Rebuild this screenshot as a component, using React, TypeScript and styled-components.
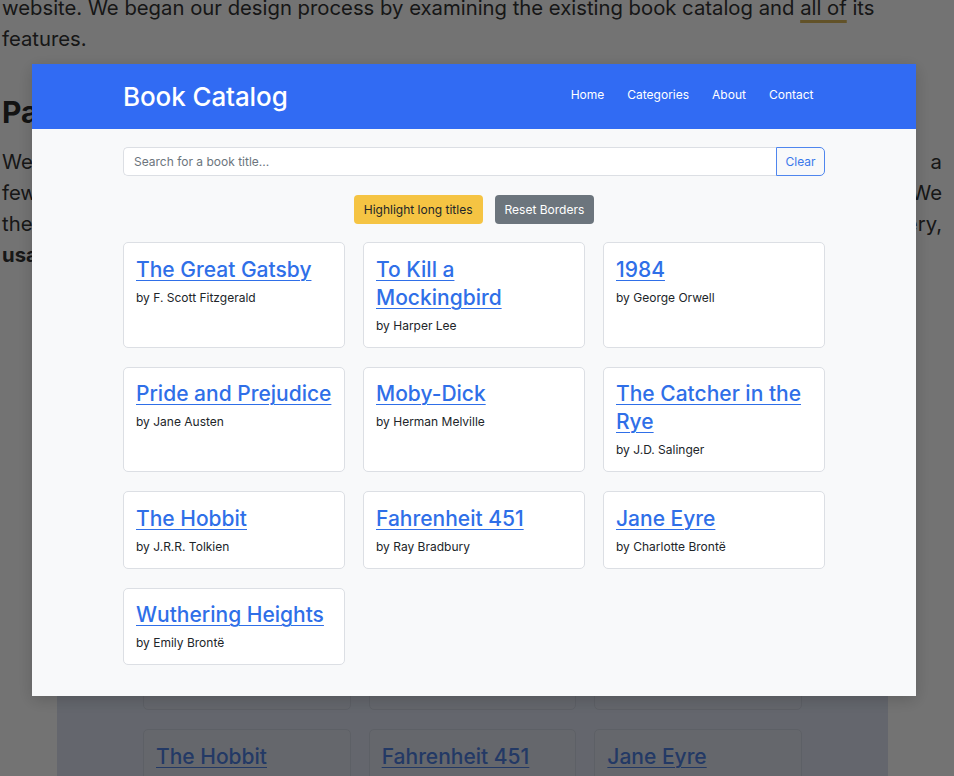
import React from 'react';
import styled, { createGlobalStyle } from 'styled-components';

// =============================================================================
// Constants
// =============================================================================

const BRAND_BLUE = '#316bf3';
const LINK_BLUE = '#2f6fe8';
const TEXT_DARK = '#212529';
const BORDER = '#dcdfe4';

const FONT = `Inter, "Noto Sans", "Liberation Sans", sans-serif`;

const BOOKS = [
  { title: 'The Great Gatsby', author: 'F. Scott Fitzgerald' },
  { title: 'To Kill a Mockingbird', author: 'Harper Lee' },
  { title: '1984', author: 'George Orwell' },
  { title: 'Pride and Prejudice', author: 'Jane Austen' },
  { title: 'Moby-Dick', author: 'Herman Melville' },
  { title: 'The Catcher in the Rye', author: 'J.D. Salinger' },
  { title: 'The Hobbit', author: 'J.R.R. Tolkien' },
  { title: 'Fahrenheit 451', author: 'Ray Bradbury' },
  { title: 'Jane Eyre', author: 'Charlotte Brontë' },
  { title: 'Wuthering Heights', author: 'Emily Brontë' },
];

const NAV = ['Home', 'Categories', 'About', 'Contact'];

type Tone = 'live' | 'preview';

// =============================================================================
// Global
// =============================================================================

const GlobalStyle = createGlobalStyle`
  html, body {
    margin: 0;
    padding: 0;
    background: #ffffff;
    height: 776px;
    overflow: hidden;
  }
  * {
    box-sizing: border-box;
  }
`;

// =============================================================================
// Background article
// =============================================================================

const Article = styled.article`
  width: 954px;
  padding: 0 12px 0 2px;
  font-family: ${FONT};
  font-size: 20.3px;
  line-height: 31px;
  color: #333333;
`;

const Paragraph = styled.p<{ $first?: boolean }>`
  margin: ${(p) => (p.$first ? '-8px' : '0')} 0 0;
`;

const Line = styled.span<{ $justify?: boolean }>`
  display: block;
  text-align: ${(p) => (p.$justify ? 'justify' : 'left')};
  text-align-last: ${(p) => (p.$justify ? 'justify' : 'auto')};
`;

const InlineLink = styled.a`
  color: inherit;
  text-decoration: underline;
  text-decoration-color: #d9b55a;
  text-decoration-thickness: 3px;
  text-underline-offset: 5px;
`;

const Heading = styled.h2`
  margin: 39px 0 15px;
  font-size: 30px;
  line-height: 38px;
  font-weight: 700;
  color: #2a2a2a;
`;

const Preview = styled.figure`
  margin: 32px 0 0 55px;
  width: 831px;
  background: #dde3f1;
`;

// =============================================================================
// Lightbox
// =============================================================================

const Overlay = styled.div`
  position: fixed;
  inset: 0;
  background: rgba(0, 0, 0, 0.55);
`;

const Modal = styled.div`
  position: fixed;
  left: 32px;
  top: 64px;
  width: 884px;
  box-shadow: 0 4px 16px rgba(0, 0, 0, 0.18);
`;

// =============================================================================
// Catalog
// =============================================================================

const Shell = styled.div<{ $tone: Tone }>`
  font-family: ${FONT};
  background: ${(p) => (p.$tone === 'live' ? '#f8f9fa' : 'transparent')};
`;

const Header = styled.header<{ $tone: Tone }>`
  background: ${(p) => (p.$tone === 'live' ? BRAND_BLUE : '#3a63c9')};
  height: 65px;
`;

const Container = styled.div<{ $width: number }>`
  width: ${(p) => p.$width}px;
  margin: 0 auto;
`;

const HeaderInner = styled(Container)`
  height: 100%;
  display: flex;
  align-items: center;
  justify-content: space-between;
`;

const Brand = styled.div`
  color: #ffffff;
  font-size: 26px;
  font-weight: 500;
  letter-spacing: -0.1px;
`;

const NavList = styled.nav`
  display: flex;
  margin-top: -4px;
`;

const NavLink = styled.a`
  color: #ffffff;
  font-size: 12px;
  padding: 0 11.5px;
  text-decoration: none;
`;

const Body = styled(Container)`
  padding: 18px 0 31px;
`;

const SearchRow = styled.div`
  display: flex;
  height: 29px;
`;

const SearchInput = styled.input`
  flex: 1;
  height: 29px;
  border: 1px solid ${BORDER};
  border-right: none;
  border-radius: 5px 0 0 5px;
  background: #ffffff;
  padding: 0 10px;
  font-family: ${FONT};
  font-size: 12px;
  color: ${TEXT_DARK};
  &::placeholder {
    color: #6c757d;
  }
`;

const ClearButton = styled.button`
  width: 49px;
  height: 29px;
  border: 1px solid #4f86ee;
  border-radius: 0 5px 5px 0;
  background: transparent;
  color: #3a78ea;
  font-family: ${FONT};
  font-size: 12px;
  padding: 0;
`;

const ActionRow = styled.div`
  display: flex;
  justify-content: center;
  gap: 12px;
  margin-top: 19px;
`;

const ActionButton = styled.button<{ $variant: 'warning' | 'secondary' }>`
  height: 29px;
  padding: 0 10px;
  border: none;
  border-radius: 4px;
  font-family: ${FONT};
  font-size: 12px;
  background: ${(p) => (p.$variant === 'warning' ? '#f5c443' : '#6c757d')};
  color: ${(p) => (p.$variant === 'warning' ? TEXT_DARK : '#ffffff')};
`;

const Grid = styled.div`
  display: grid;
  grid-template-columns: repeat(3, 1fr);
  gap: 19px 18px;
  margin-top: 18px;
`;

const Card = styled.div<{ $tone: Tone }>`
  background: ${(p) => (p.$tone === 'live' ? '#ffffff' : '#dfe4f0')};
  border: 1px solid ${(p) => (p.$tone === 'live' ? BORDER : '#cfd5e2')};
  border-radius: 5px;
  padding: 12.5px 12px 12px;
`;

const Title = styled.a<{ $tone: Tone }>`
  display: block;
  font-size: 21px;
  line-height: 28px;
  font-weight: 500;
  color: ${(p) => (p.$tone === 'live' ? LINK_BLUE : '#4f7fe0')};
  text-decoration: underline;
  text-decoration-thickness: 1px;
  text-underline-offset: 3px;
`;

const Author = styled.p`
  margin: 5px 0 0;
  font-size: 12px;
  line-height: 18px;
  color: ${TEXT_DARK};
`;

// =============================================================================
// Components
// =============================================================================

interface CatalogProps {
  width: number;
  tone: Tone;
}

const Catalog = ({ width, tone }: CatalogProps) => (
  <Shell $tone={tone}>
    <Header $tone={tone}>
      <HeaderInner $width={width}>
        <Brand>Book Catalog</Brand>
        <NavList>
          {NAV.map((item) => (
            <NavLink key={item} href="#">
              {item}
            </NavLink>
          ))}
        </NavList>
      </HeaderInner>
    </Header>
    <Body $width={width}>
      <SearchRow>
        <SearchInput placeholder="Search for a book title..." />
        <ClearButton>Clear</ClearButton>
      </SearchRow>
      <ActionRow>
        <ActionButton $variant="warning">Highlight long titles</ActionButton>
        <ActionButton $variant="secondary">Reset Borders</ActionButton>
      </ActionRow>
      <Grid>
        {BOOKS.map((book) => (
          <Card key={book.title} $tone={tone}>
            <Title $tone={tone} href="#">
              {book.title}
            </Title>
            <Author>by {book.author}</Author>
          </Card>
        ))}
      </Grid>
    </Body>
  </Shell>
);

const App = () => (
  <>
    <GlobalStyle />
    <Article>
      <Paragraph $first>
        website. We began our design process by examining the existing book catalog and{' '}
        <InlineLink href="#">all of</InlineLink> its features.
      </Paragraph>
      <Heading>Pain Points</Heading>
      <Paragraph>
        <Line $justify>We conducted a heuristic review of the current catalog interface and noted a</Line>
        <Line $justify>few key problems that made it hard for readers to find the books they wanted. We</Line>
        <Line $justify>then sorted these issues by severity, focusing on the ones that hurt discovery,</Line>
        <Line>
          <strong>usability</strong> and accessibility the most.
        </Line>
      </Paragraph>
      <Preview>
        <Catalog width={659} tone="preview" />
      </Preview>
    </Article>
    <Overlay />
    <Modal>
      <Catalog width={702} tone="live" />
    </Modal>
  </>
);

export default App;
